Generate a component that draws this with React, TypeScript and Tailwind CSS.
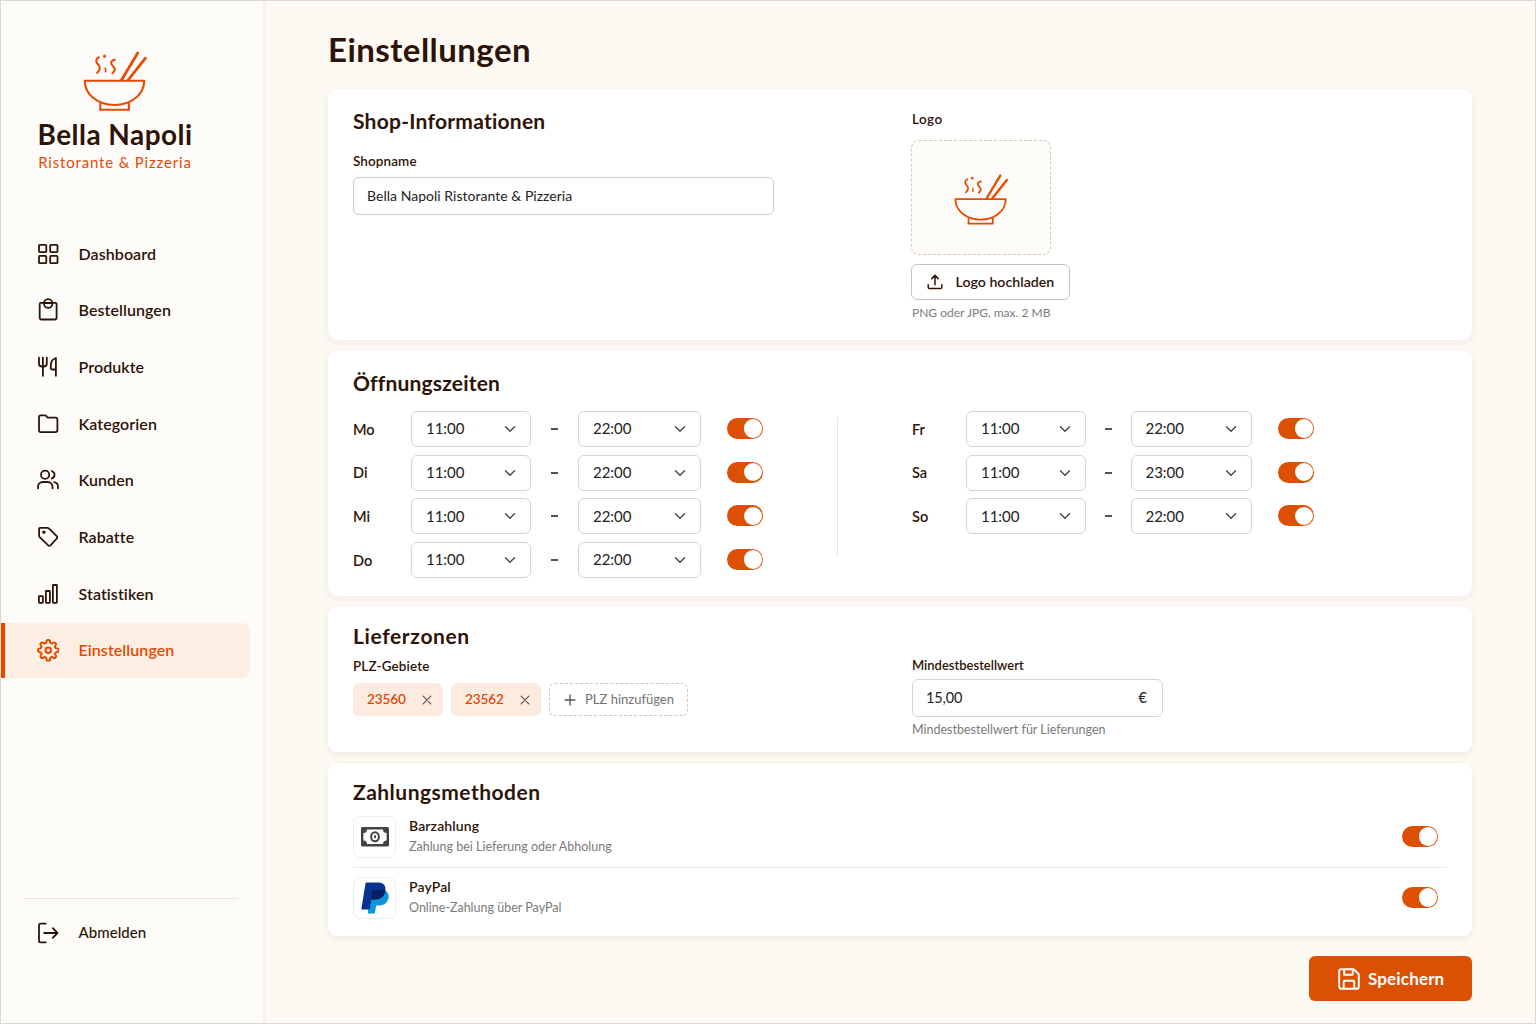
import React, { useState } from "react";
import { FiSettings } from "react-icons/fi";

type IconProps = { children: React.ReactNode; className?: string };

/* Shared 24px outline frame for the navigation icons. */
function Outline({ children, className = "" }: IconProps) {
  return (
    <svg
      viewBox="0 0 24 24"
      className={`size-6 shrink-0 ${className}`}
      fill="none"
      stroke="currentColor"
      strokeWidth="1.8"
      strokeLinecap="round"
      strokeLinejoin="round"
      aria-hidden="true"
    >
      {children}
    </svg>
  );
}

function BowlLogo({ className }: { className: string }) {
  return (
    <svg
      viewBox="82 50 66 62"
      className={className}
      fill="none"
      stroke="#e84a05"
      strokeWidth="2.1"
      strokeLinecap="round"
      strokeLinejoin="round"
      aria-hidden="true"
    >
      <path d="M84.8 80.7h59.4c0 13.8-13 24.3-29.7 24.3s-29.7-10.500-29.700-24.300Z" />
      <path d="M100.300 103.500v6.200h28.600v-6.200" strokeLinejoin="miter" />
      <path d="M121.500 80 137.700 53M128.200 80l17.200-21.800" strokeWidth="2.800" />
      <path
        d="M98.900 57.300c-3.400 1.700-3.400 4.600-.8 7.200 2.600 2.600 2.100 5.800-.9 8.300M114.800 59.800c-4.300 1.100-4.700 3.700-2 6.200 2.900 2.700 2.200 5.100-.4 7.200"
        strokeWidth="2.100"
      />
      <path d="M104.600 56v.2" strokeWidth="3.100" />
      <path d="M105.100 68.300c1 .8.900 2 .3 3.400" strokeWidth="1.600" />
    </svg>
  );
}

const navItems = [
  {
    label: "Dashboard",
    icon: (
      <Outline>
        <rect x="3" y="2.800" width="7.300" height="7.300" rx="0.800" />
        <rect x="14.200" y="2.800" width="7.300" height="7.300" rx="0.800" />
        <rect x="3" y="13.900" width="7.300" height="7.300" rx="0.800" />
        <rect x="14.200" y="13.900" width="7.300" height="7.300" rx="0.800" />
      </Outline>
    ),
  },
  {
    label: "Bestellungen",
    icon: (
      <Outline>
        <path d="M8 4.900H4.900a1.200 1.200 0 0 0-1.200 1.200v13.700a1.700 1.700 0 0 0 1.700 1.700h13.500a1.700 1.700 0 0 0 1.700-1.700V6.100a1.200 1.200 0 0 0-1.200-1.200h-3.100" />
        <circle cx="12.200" cy="5.500" r="4.300" />
        <path d="M8.200 5h8" />
      </Outline>
    ),
  },
  {
    label: "Produkte",
    icon: (
      <Outline>
        <path d="M3 2.700v5.800a3 3 0 0 0 3 3h1.800a3 3 0 0 0 3-3V2.700M6.900 2.700v18.100" />
        <path d="M19.900 20.800V3c-2.900.8-5.100 3.900-5.100 7.700v2.400a1.400 1.400 0 0 0 1.400 1.400h3.700" />
      </Outline>
    ),
  },
  {
    label: "Kategorien",
    icon: (
      <Outline>
        <path d="M3 5.100a1.800 1.800 0 0 1 1.800-1.800h4.100c.5 0 1 .2 1.300.6l1.500 1.700h7.900a1.800 1.800 0 0 1 1.800 1.800v10.900a1.800 1.800 0 0 1-1.800 1.800H4.800A1.800 1.800 0 0 1 3 18.300Z" />
      </Outline>
    ),
  },
  {
    label: "Kunden",
    icon: (
      <Outline>
        <circle cx="9.100" cy="6.800" r="4.100" />
        <path d="M2 20.300v-1.500a4.800 4.800 0 0 1 4.800-4.800h4.900a4.800 4.800 0 0 1 4.800 4.800v1.500M15.700 3.100a3.900 3.900 0 0 1 0 7.500M18.200 14.100a4.700 4.700 0 0 1 3.800 4.600v1.600" />
      </Outline>
    ),
  },
  {
    label: "Rabatte",
    icon: (
      <Outline>
        <path d="M4 2.800h7.400c.5 0 1 .2 1.400.6l8 7.800a1.600 1.600 0 0 1 0 2.300l-6.300 6.800a1.600 1.600 0 0 1-2.300 0l-8.500-8.200a2 2 0 0 1-.6-1.400V3.700a.9.9 0 0 1 .9-.9Z" />
        <circle cx="7.800" cy="7.200" r="1.200" fill="currentColor" strokeWidth="1" />
      </Outline>
    ),
  },
  {
    label: "Statistiken",
    icon: (
      <Outline>
        <rect x="2.900" y="14.200" width="4" height="6.600" rx="0.500" />
        <rect x="9.900" y="9" width="4" height="11.800" rx="0.500" />
        <rect x="16.900" y="3" width="4" height="17.800" rx="0.500" />
      </Outline>
    ),
  },
  {
    label: "Einstellungen",
    icon: (
      <span className="flex size-6 shrink-0 items-center justify-center">
        <FiSettings className="size-[22.500px]" strokeWidth={2.1} aria-hidden="true" />
      </span>
    ),
  },
];

function Sidebar() {
  return (
    <aside className="flex w-[263px] shrink-0 flex-col bg-[#fefcf9] shadow-[1px_0_5px_rgba(120,80,30,0.10)]">
      <div className="mt-[49px] flex flex-col items-center pr-[33px]">
        <BowlLogo className="h-[62px] w-[66px]" />
        <div className="mt-1 text-[28px] leading-9 font-bold tracking-[0.450px] whitespace-nowrap">
          Bella Napoli
        </div>
        <div className="mt-px text-[15px] leading-[19px] tracking-[0.820px] whitespace-nowrap text-[#e84a05]">
          Ristorante &amp; Pizzeria
        </div>
      </div>
      <nav className="mt-[54px] flex flex-col gap-[1.700px]">
        {navItems.map((item) => {
          const active = item.label === "Einstellungen";
          return (
            <a
              key={item.label}
              href="#"
              className={`mr-[13px] flex h-[55px] items-center gap-[18.500px] rounded-r-lg border-l-[5px] pl-[31px] text-[16px] font-semibold tracking-[0.080px] ${
                active
                  ? "border-[#e34a00] bg-[#fdefe4] text-[#e34a00]"
                  : "border-transparent"
              }`}
            >
              {item.icon}
              <span>{item.label}</span>
            </a>
          );
        })}
      </nav>
      <div className="mt-auto mr-[25px] mb-[63px] ml-6 border-t border-[#f0e4da] pt-[6px]">
        <a href="#" className="flex h-[55px] items-center gap-[18.500px] pl-3 text-[15px] font-medium">
          <Outline>
            <path d="M9.700 2.700H4.600A1.600 1.600 0 0 0 3 4.300v15.400a1.600 1.600 0 0 0 1.600 1.600h5.100M8.200 12h13.200M16.800 7.200l4.700 4.800-4.700 4.800" />
          </Outline>
          <span className="tracking-[0.050px]">Abmelden</span>
        </a>
      </div>
    </aside>
  );
}

function Card({ className, children }: { className: string; children: React.ReactNode }) {
  return (
    <section
      className={`rounded-[9px] bg-white px-[25px] shadow-[0_2px_7px_rgba(110,80,40,0.10)] ${className}`}
    >
      {children}
    </section>
  );
}

function Heading({ className = "", children }: { className?: string; children: React.ReactNode }) {
  return (
    <h2 className={`text-[21px] leading-7 font-bold whitespace-nowrap ${className}`}>{children}</h2>
  );
}

function Toggle({ label }: { label: string }) {
  const [on, setOn] = useState(true);
  return (
    <button
      type="button"
      role="switch"
      aria-checked={on}
      aria-label={label}
      onClick={() => setOn(!on)}
      className={`flex h-[21px] w-[36.500px] shrink-0 items-center rounded-full p-px ${
        on ? "justify-end bg-[#dd5003]" : "justify-start bg-[#d6d0ca]"
      }`}
    >
      <span className="size-[18.500px] rounded-full bg-white" />
    </button>
  );
}

function TimeSelect({ value, className }: { value: string; className: string }) {
  return (
    <button
      type="button"
      className={`flex h-9 shrink-0 items-center justify-between rounded-md border border-[#d9d4d0] bg-white px-[14px] text-[15px] text-[#222] ${className}`}
    >
      <span className="-mt-px tracking-[-0.050px]">{value}</span>
      <svg
        viewBox="0 0 12 8"
        className="h-2 w-3"
        fill="none"
        stroke="#454545"
        strokeWidth="1.400"
        strokeLinecap="round"
        strokeLinejoin="round"
        aria-hidden="true"
      >
        <path d="m1.500 1.800 4.500 4.500 4.500-4.500" />
      </svg>
    </button>
  );
}

const weekLeft = [
  ["Mo", "11:00", "22:00"],
  ["Di", "11:00", "22:00"],
  ["Mi", "11:00", "22:00"],
  ["Do", "11:00", "22:00"],
];
const weekRight = [
  ["Fr", "11:00", "22:00"],
  ["Sa", "11:00", "23:00"],
  ["So", "11:00", "22:00"],
];

function Hours({ days, wide }: { days: string[][]; wide: boolean }) {
  return (
    <div className="flex flex-col gap-[7.700px]">
      {days.map(([day, from, to]) => (
        <div key={day} className="flex h-9 items-center">
          <span className={`pt-px text-[14.500px] font-semibold ${wide ? "w-[58px]" : "w-[54px]"}`}>{day}</span>
          <TimeSelect value={from} className="w-[120px]" />
          <span className={`flex justify-center ${wide ? "w-[47px]" : "w-[44.500px]"}`}>
            <span className="h-[2px] w-[7px] bg-[#5d4f48]" />
          </span>
          <TimeSelect value={to} className={wide ? "w-[122.500px]" : "w-[121.500px]"} />
          <span className={`-mt-px flex ${wide ? "ml-[26px]" : "ml-[25.500px]"}`}>
            <Toggle label={day} />
          </span>
        </div>
      ))}
    </div>
  );
}

function Chip({ code }: { code: string }) {
  return (
    <span className="flex h-[33px] w-[90px] items-center justify-between rounded-md bg-[#fdebdf] pr-[11px] pl-[14px] text-[13.500px] font-semibold text-[#d94a08]">
      <span className="-mt-px tracking-[-0.050px]">{code}</span>
      <svg
        viewBox="0 0 10 10"
        className="size-[10px]"
        fill="none"
        stroke="#5c5450"
        strokeWidth="1.200"
        strokeLinecap="round"
        aria-hidden="true"
      >
        <path d="m1.200 1.200 7.600 7.600M8.800 1.200 1.200 8.800" />
      </svg>
    </span>
  );
}

function CashIcon() {
  return (
    <svg viewBox="0 0 28 20" className="h-5 w-7" aria-hidden="true">
      <rect width="28" height="19.500" rx="1.600" fill="#414345" />
      <path
        d="M6 2.500h16a3.600 3.600 0 0 0 3.600 3.600v7.300A3.600 3.600 0 0 0 22 17H6a3.600 3.600 0 0 0-3.600-3.600V6.100A3.600 3.600 0 0 0 6 2.500Z"
        fill="#fff"
      />
      <ellipse cx="14" cy="9.800" rx="3.900" ry="4.500" fill="none" stroke="#414345" strokeWidth="2" />
      <ellipse cx="14" cy="9.800" rx="1.100" ry="1.800" fill="#414345" />
    </svg>
  );
}

function PaypalIcon() {
  return (
    <svg viewBox="0 0 28 32" className="h-8 w-7" aria-hidden="true">
      <path
        d="M9.500 8h13.300c3.900 1.400 5.500 4.300 4.700 8-1.100 5.100-4.600 7.500-10.300 7.500h-2l-1.300 7.300a.9.9 0 0 1-.9.700H7.700a.8.8 0 0 1-.8-1Z"
        fill="#0c96dc"
      />
      <path
        d="M5.600.5h11.200c5.900 0 8.500 3.200 7.500 8.500-1.100 5.700-4.700 8.400-10.400 8.400h-3.500l-1.700 9.400a.8.800 0 0 1-.8.700H1.200a.8.800 0 0 1-.8-1L4.500 1.400A1.200 1.200 0 0 1 5.600.5Z"
        fill="#07338f"
      />
      <path
        d="M12.500 8h11.900l-.1 1c-1.100 5.700-4.700 8.400-10.400 8.400h-3.500L11.700 8.700a.8.800 0 0 1 .8-.7Z"
        fill="#071f63"
      />
    </svg>
  );
}

function PaymentRow({
  icon,
  title,
  note,
  className,
}: {
  icon: React.ReactNode;
  title: string;
  note: string;
  className: string;
}) {
  return (
    <div className={`flex pr-[9px] ${className}`}>
      <span className="flex h-[42px] w-[43px] items-center justify-center rounded-[7px] border border-[#efedeb]">
        {icon}
      </span>
      <div className="ml-[13px] flex flex-1 flex-col">
        <span className="text-[14px] leading-5 font-semibold tracking-[0.130px]">{title}</span>
        <span className="pt-px text-[12.500px] leading-5 text-[#7b7a79]">{note}</span>
      </div>
      <span className="-mt-px flex items-center">
        <Toggle label={title} />
      </span>
    </div>
  );
}

export default function App() {
  return (
    <div className="flex h-[1024px] w-[1536px] overflow-hidden border border-[#d9d8d6] bg-[#fdfaf4] font-['Lato',sans-serif] text-[#2e1408]">
      <div className="-ml-px flex">
        <Sidebar />
      </div>
      <main className="flex w-[1209px] flex-col pt-7 pl-[65px]">
        <h1 className="text-[33px] leading-10 font-bold tracking-[0.450px]">Einstellungen</h1>

        <Card className="mt-5 grid h-[251px] shrink-0 grid-cols-[558px_1fr]">
          <div className="pt-[18px]">
            <Heading className="tracking-[0.240px]">Shop-Informationen</Heading>
            <label
              htmlFor="shopname"
              className="mt-4 block text-[13.500px] leading-5 font-semibold tracking-[0.100px]"
            >
              Shopname
            </label>
            <input
              id="shopname"
              defaultValue="Bella Napoli Ristorante & Pizzeria"
              className="mt-[6px] block h-[38px] w-[421px] rounded-md border border-[#d2ccc8] bg-white px-[13px] pb-[2px] text-[14px] tracking-[0.030px] text-[#222] outline-none"
            />
          </div>
          <div className="pt-5">
            <div className="pl-px text-[13.500px] leading-5 font-semibold tracking-[0.400px]">Logo</div>
            <div className="mt-[11px] flex h-[115px] w-[140px] items-center justify-center rounded-lg border border-dashed border-[#d5c9be] bg-[#fefcf8] pt-1">
              <BowlLogo className="h-[52.700px] w-[56px]" />
            </div>
            <button
              type="button"
              className="mt-[9px] flex h-9 w-[159px] items-center rounded-md border border-[#c9c3bf] bg-white pl-[15px] text-[14.200px] font-semibold whitespace-nowrap"
            >
              <svg
                viewBox="0 0 16 16"
                className="size-4"
                fill="none"
                stroke="currentColor"
                strokeWidth="1.500"
                strokeLinecap="round"
                strokeLinejoin="round"
                aria-hidden="true"
              >
                <path d="M1.200 10.800v2.400a1.300 1.300 0 0 0 1.300 1.300h11a1.300 1.300 0 0 0 1.300-1.300v-2.400M8 10.800V1.500M4.800 4.600 8 1.400l3.200 3.200" />
              </svg>
              <span className="ml-[12.500px]">Logo hochladen</span>
            </button>
            <div className="mt-[3px] pl-px text-[12px] leading-5 text-[#7b7a79]">PNG oder JPG, max. 2 MB</div>
          </div>
        </Card>

        <Card className="mt-[11px] h-[245px] shrink-0 pt-[18px]">
          <Heading className="tracking-[0.180px]">Öffnungszeiten</Heading>
          <div className="mt-[14px] flex">
            <Hours days={weekLeft} wide />
            <div className="mt-[6px] mr-[74px] ml-[74px] h-[139px] w-px bg-[#e8e6e4]" />
            <Hours days={weekRight} wide={false} />
          </div>
        </Card>

        <Card className="mt-[11px] grid h-[145px] shrink-0 grid-cols-[559px_1fr]">
          <div className="pt-[15px]">
            <Heading className="tracking-[0.620px]">Lieferzonen</Heading>
            <div className="mt-[6px] text-[13.500px] leading-5 font-semibold tracking-[0.100px]">PLZ-Gebiete</div>
            <div className="mt-[7px] flex gap-2">
              <Chip code="23560" />
              <Chip code="23562" />
              <button
                type="button"
                className="flex h-[33px] w-[139px] items-center rounded-md border border-dashed border-[#c8c5c2] pl-[14px] text-[13px] whitespace-nowrap text-[#747270]"
              >
                <svg
                  viewBox="0 0 12 12"
                  className="size-3"
                  fill="none"
                  stroke="#555"
                  strokeWidth="1.300"
                  strokeLinecap="round"
                  aria-hidden="true"
                >
                  <path d="M6 1v10M1 6h10" />
                </svg>
                <span className="ml-[9px]">PLZ hinzufügen</span>
              </button>
            </div>
          </div>
          <div className="pt-12">
            <label htmlFor="minimum" className="block text-[13px] leading-5 font-semibold">
              Mindestbestellwert
            </label>
            <div className="mt-[4px] flex h-[38px] w-[251px] items-center rounded-md border border-[#d9d4d0] bg-white pr-[15px] pl-[13px] text-[14.500px] text-[#222]">
              <input
                id="minimum"
                defaultValue="15,00"
                className="w-full min-w-0 flex-1 bg-transparent tracking-[-0.100px] outline-none"
              />
              <span>€</span>
            </div>
            <div className="mt-[3px] text-[12.500px] leading-5 text-[#7b7a79]">Mindestbestellwert für Lieferungen</div>
          </div>
        </Card>

        <Card className="mt-[11px] h-[173px] shrink-0 pt-[15px]">
          <Heading className="tracking-[0.480px]">Zahlungsmethoden</Heading>
          <PaymentRow
            icon={<CashIcon />}
            title="Barzahlung"
            note="Zahlung bei Lieferung oder Abholung"
            className="mt-[10px]"
          />
          <div className="mt-[9px] h-px bg-[#ebe9e7]" />
          <PaymentRow
            icon={<PaypalIcon />}
            title="PayPal"
            note="Online-Zahlung über PayPal"
            className="mt-[9px]"
          />
        </Card>

        <button
          type="button"
          className="mt-5 flex h-[45px] w-[163px] shrink-0 items-center self-end rounded-md bg-[#dc5003] pl-[29px] text-[17px] font-bold text-white"
        >
          <svg
            viewBox="0 0 22 22"
            className="size-[22px]"
            fill="none"
            stroke="currentColor"
            strokeWidth="1.900"
            strokeLinecap="round"
            strokeLinejoin="round"
            aria-hidden="true"
          >
            <path d="M3 1.200h12.700l5.100 5v12.600a2 2 0 0 1-2 2H3.200a2 2 0 0 1-2-2V3a1.800 1.800 0 0 1 1.800-1.800ZM6.200 1.500v5.300h8.500V1.500M5.700 20.500v-6.800a1 1 0 0 1 1-1h8.600a1 1 0 0 1 1 1v6.800" />
          </svg>
          <span className="ml-2 tracking-[0.150px]">Speichern</span>
        </button>
      </main>
    </div>
  );
}
